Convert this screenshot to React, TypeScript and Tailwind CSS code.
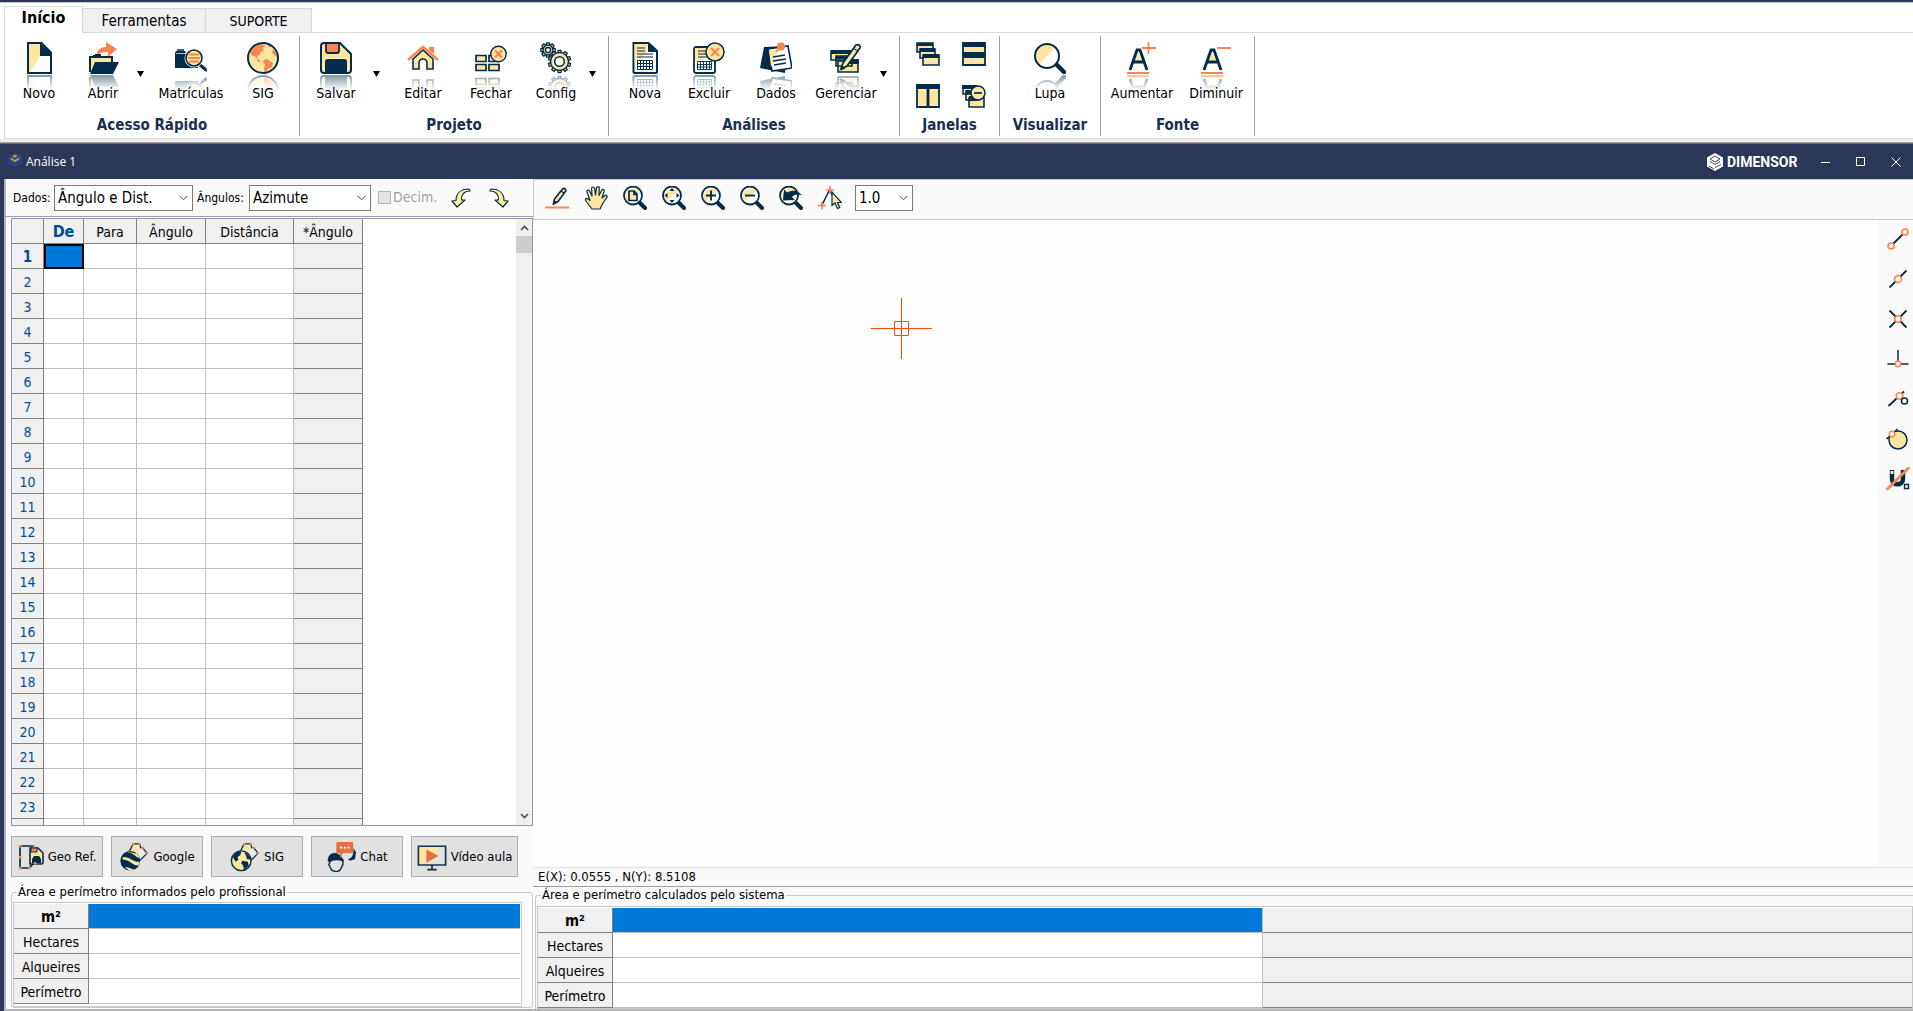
import React from "react";

const N = "#032c4b";
const C = "#fee5a0";
const O = "#f98551";

type IconProps = { className?: string };
type Icon = (p: IconProps) => React.ReactElement;

function svg(box: string, body: React.ReactNode): Icon {
  return ({ className }: IconProps) => (
    <svg viewBox={box} className={className} fill="none" aria-hidden="true">
      {body}
    </svg>
  );
}

/* ---------- ribbon icons (32 x 32) ---------- */

const Novo = svg("0 0 32 32", <>
  <path d="M4.500 1h14L28 11v20H4.500z" fill="#fff" />
  <path d="M5 1h13v12L7 30H5z" fill={C} />
  <path d="M17 1l11 10v3H17z" fill={N} />
  <path d="M5 1h13.500L28 10.500V31H5z" stroke={N} strokeWidth="2" />
</>);

const Abrir = svg("0 0 32 32", <>
  <path d="M9 14c1-7 6-9 10-9V0l11 7-9 8v-5c-5-.5-8 .5-12 4z" fill={O} />
  <path d="M3 30V15h22v7" fill={C} stroke={N} strokeWidth="2" />
  <path d="M6 14h3v-1h4v1" stroke={N} strokeWidth="2" />
  <path d="M8 20h24l-6 12H3z" fill={N} />
</>);

const Matriculas = svg("0 0 32 32", <>
  <path d="M0 11l1-2h9l1 2h12v15H0z" fill={N} />
  <path d="M2 8h7" stroke={N} strokeWidth="1.500" />
  <path d="M1 11.500h11" stroke="#fff" strokeWidth=".7" />
  <path d="M24 22l7 6" stroke={N} strokeWidth="3" strokeLinecap="round" />
  <circle cx="19" cy="16" r="8" fill={C} stroke="#fff" strokeWidth="3" />
  <circle cx="19" cy="16" r="8" fill={C} stroke={N} strokeWidth="1.600" />
  <path d="M14 12.500h10M13 16h12M14 19.500h10" stroke={O} strokeWidth="1.800" />
</>);

const Sig = svg("0 0 32 32", <>
  <circle cx="16" cy="16" r="15" fill={C} />
  <path d="M3 10C5 6 9 3 13 2l4 1 1 2-3 1 2 2-3 2-2 3-2 1 1 3-2-1-1-2H5zM20 3l3-.5 2 2-2 1zM10 17l4 2-1 1-3-1zM17 18l3-1 6 4-1 4-4 2-3 4-1-5 1-3-2-3zM26 7l3 4 1 4-3-2-2-3z" fill={O} />
  <circle cx="16" cy="16" r="15" stroke={N} strokeWidth="2" />
</>);

const Salvar = svg("0 0 32 32", <>
  <path d="M4 1h16l11 11v16a3 3 0 0 1-3 3H4a3 3 0 0 1-3-3V4a3 3 0 0 1 3-3z" fill={C} stroke={N} strokeWidth="2" />
  <path d="M6 1h13v8a2 2 0 0 1-2 2H8a2 2 0 0 1-2-2z" fill={O} stroke={N} strokeWidth="1.800" />
  <path d="M5 31V20a3 3 0 0 1 3-3h16a3 3 0 0 1 3 3v11z" fill={N} />
</>);

const Editar = svg("0 0 32 32", <>
  <path d="M6 17L16 8l10 9v10h-6v-6a4 4 0 0 0-8 0v6H6z" fill={C} stroke={N} strokeWidth="1.600" />
  <path d="M22 5h5v7l-5-4z" fill={O} />
  <path d="M1 18L16 5l15 13" stroke={O} strokeWidth="2.600" />
</>);

const Fechar = svg("0 0 32 32", <>
  <path d="M1 13.500h10v6H1zM14 13.500h10v6H14zM1 22.500h10v6H1zM14 22.500h10v6H14z" fill={C} stroke={N} strokeWidth="1.700" />
  <circle cx="23.500" cy="12" r="7.700" fill={C} stroke={N} strokeWidth="1.400" />
  <path d="M20 8.500l7 7M27 8.500l-7 7" stroke={O} strokeWidth="2.200" />
</>);

const teeth = (n: number) => Array.from({ length: n }, (_, i) => (i * 360) / n);

function Gear({ x, y, r, n, hole }: { x: number; y: number; r: number; n: number; hole: number }) {
  return (
    <g transform={`translate(${x} ${y})`}>
      {teeth(n).map((a) => (
        <path key={a} transform={`rotate(${a})`} d={`M-2 ${-r + 1}l.6-3.200h2.800l.6 3.200`} fill={C} stroke={N} strokeWidth="1.300" />
      ))}
      <circle r={r} stroke={N} strokeWidth="1.400" fill={C} />
      <circle r={hole} fill="#fff" stroke={N} strokeWidth="1.500" />
    </g>
  );
}

const Config = svg("0 0 32 32", <>
  <Gear x={8} y={8} r={5} n={8} hole={2.6} />
  <Gear x={19.500} y={19.500} r={9} n={10} hole={4.8} />
</>);

const Nova = svg("0 0 32 32", <>
  <path d="M4.500 1h15L28 9v21a1 1 0 0 1-1 1H5.500a1 1 0 0 1-1-1z" fill="#fff" stroke={N} strokeWidth="2" />
  <path d="M5.500 2h13v8L8 20H5.500z" fill={C} />
  <path d="M19 1l9 9h-9z" fill={N} />
  <path d="M8 6h8M8 9h8M8 12h16M8 15h16" stroke={N} strokeWidth="1.100" />
  <path d="M8.500 18.500h15v9h-15zM8 21.500h16M8 24.500h16M11.500 18v10M14.500 18v10M17.500 18v10M20.500 18v10" stroke={N} strokeWidth="1" />
</>);

const Excluir = svg("0 0 32 32", <>
  <path d="M4 5h18v24a2 2 0 0 1-2 2H3a2 2 0 0 1-2-2V7a2 2 0 0 1 2-2z" fill="#fff" stroke={N} strokeWidth="1.800" />
  <path d="M2 6h16v5L6 19H2z" fill={C} />
  <path d="M5 9h8M5 12h8M5 15h10" stroke={N} strokeWidth="1.200" />
  <path d="M4.500 19.500h14v8h-14zM4 22.500h15M4 25h15M7.500 19v9M10.500 19v9M13.500 19v9M16.500 19v9" stroke={N} strokeWidth=".9" />
  <circle cx="22" cy="10" r="9" fill={C} stroke={N} strokeWidth="1.500" />
  <path d="M18 6l8 8M26 6l-8 8" stroke={O} strokeWidth="2.300" />
</>);

const Dados = svg("0 0 32 32", <>
  <path d="M4 5l23-1-2 27L0 26z" fill={N} />
  <path d="M8 7l20-3 4 22-20 3z" fill="#fff" stroke={N} strokeWidth="1.600" />
  <path d="M9 8h9l-7 17z" fill={C} />
  <path d="M13 15l12-2M13 19l13-2M14 23l12-2" stroke={N} strokeWidth="1.500" />
  <path d="M20 5l-4 5" stroke={O} strokeWidth="2" />
  <circle cx="21" cy="4.500" r="4" fill={O} />
</>);

const Gerenciar = svg("0 0 32 32", <>
  <path d="M1 9h18v9H1zM6 14h16v10H6zM8 19h20v11H8z" fill={C} stroke={N} strokeWidth="1.600" />
  <path d="M1 8h20v4H1zM6 14h14v3H6zM14 17h15v5H14z" fill={N} />
  <path d="M11 27l2-6L26 3c3-1 5 1 4 3L17 24z" fill={C} stroke={N} strokeWidth="1.700" />
  <path d="M11 28l1-4 3 2zM23 6l5 3" fill={N} stroke={N} />
</>);

const Lupa = svg("0 0 32 32", <>
  <path d="M21 21l9 9" stroke={N} strokeWidth="4.500" strokeLinecap="round" />
  <circle cx="13" cy="14" r="12" fill="#fff" />
  <path d="M5 23A12 12 0 0 1 21 5z" fill={C} />
  <circle cx="13" cy="14" r="12" stroke={N} strokeWidth="2" />
</>);

const Aumentar = svg("0 0 32 32", <>
  <path d="M12 9l-4 11h8z" fill={C} />
  <path d="M4 28L11 8h3l7 20M7.500 20h10" stroke={N} strokeWidth="2.800" />
  <path d="M22.500 0v12M16 6h14M1 31h22" stroke={O} strokeWidth="1.800" />
</>);

const Diminuir = svg("0 0 32 32", <>
  <path d="M12 9l-4 11h8z" fill={C} />
  <path d="M4 28L11 8h3l7 20M7.500 20h10" stroke={N} strokeWidth="2.800" />
  <path d="M17 6h14M1 31h22" stroke={O} strokeWidth="1.800" />
</>);

/* ---------- window arrangement icons (24 x 24) ---------- */

const Cascata = svg("0 0 24 24", <>
  <path d="M1 1h16v9H1z" fill={C} stroke={N} strokeWidth="1.600" />
  <path d="M1 1h16v3H1z" fill={N} />
  <path d="M4 7h15v9H4z" fill={C} stroke={N} strokeWidth="1.600" />
  <path d="M4 6h15v4H4z" fill={N} />
  <path d="M7 13h16v10H7z" fill={C} stroke={N} strokeWidth="1.600" />
  <path d="M7 12h16v4H7z" fill={N} />
</>);
const Horizontal = svg("0 0 24 24", <>
  <path d="M1 1h22v10H1zM1 12h22v11H1z" fill={C} stroke={N} strokeWidth="1.800" />
  <path d="M1 1h22v4H1zM1 12h22v4H1z" fill={N} />
</>);
const Vertical = svg("0 0 24 24", <>
  <path d="M1 1h10.500v22H1zM12.500 1H23v22H12.500z" fill={C} stroke={N} strokeWidth="1.800" />
  <path d="M0 0h24v5H0z" fill={N} />
</>);
const Ocultar = svg("0 0 24 24", <>
  <path d="M1 2h14v8H1zM4 7h12v9H4zM7 14h15v9H7z" fill={C} stroke={N} strokeWidth="1.600" />
  <path d="M0 1h14v4H0zM4 6h10v4H4zM7 12h10v5H7z" fill={N} />
  <circle cx="16" cy="9" r="7" fill={C} stroke={N} strokeWidth="1.500" />
  <path d="M12 9h8" stroke={N} strokeWidth="1.700" />
</>);

/* ---------- drawing toolbar icons (24 x 24) ---------- */

const Lapis = svg("0 0 24 24", <>
  <path d="M8.500 18l1-5 8-10c2-1.500 4 .5 3.300 2L13 15.500z" fill={C} stroke={N} strokeWidth="1.600" strokeLinejoin="round" />
  <path d="M16 5l3.500 2.500M8.500 18l1-3 2 1.500z" stroke={N} strokeWidth="1.300" />
  <path d="M0 21.500h24" stroke={O} strokeWidth="2" />
</>);
const Mao = svg("0 0 24 24", (
  <path d="M8 23L2 15c-1.500-2 .5-3.500 2-2l2 1.500L3 6c-.5-2 2-2.700 2.700-.8L8 10 7.600 2.500c0-2 2.700-2 3 0L11.500 9l1-7c.4-2 2.900-1.700 2.800.3L15 9.500l2.700-5.200c1-1.700 3-.7 2.400 1.100L18 12l3-2.500c1.300-.8 2.800.5 1.800 1.900L19 17l-3 6z" fill={C} stroke={N} strokeWidth="1.200" strokeLinejoin="round" />
));
const lens = (inner: React.ReactNode) => svg("0 0 24 24", <>
  <path d="M16 16l6 6" stroke={N} strokeWidth="4" strokeLinecap="round" />
  <circle cx="10" cy="9.500" r="9" fill="#fff" />
  <path d="M4 16A9 9 0 0 1 17 4z" fill={C} />
  <circle cx="10" cy="9.500" r="9" stroke={N} strokeWidth="1.800" />
  {inner}
</>);
const LensPage = lens(<path d="M6 5h5l3 3v6.500H6zM11 5v3.500h3" fill={C} stroke={N} strokeWidth="1.700" />);
const LensExtents = lens(<path d="M10 2l2.500 3h-5zM10 17l2.500-3h-5zM2.500 9.500l3-2.500v5zM17.500 9.500l-3-2.500v5z" fill={N} />);
const LensPlus = lens(<path d="M10 4.500v10M5 9.500h10" stroke={N} strokeWidth="1.900" />);
const LensMinus = lens(<path d="M5 9.500h10" stroke={N} strokeWidth="1.900" />);
const LensBack = lens(<path d="M4 14.500l1-11 3 3c6-3 11-2.500 15 3-4-1.500-7-1.500-10 1.500l3 3z" fill={N} />);
const Vertice = svg("0 0 24 24", <>
  <path d="M4 19l7.500-15 2.500 5" stroke={N} strokeWidth="1.500" />
  <path d="M12 0v8M8 4h8M4 15.500v8M0 19.500h8" stroke={O} strokeWidth="1.700" />
  <path d="M14 6v13.500l3-2.500 2.500 5.500 2.300-1-2.300-5h4z" fill={C} stroke={N} strokeWidth="1.200" />
</>);
const Desfazer = svg("0 0 20 20", (
  <path d="M6 19L1 13l4-.5C5 6 9 1 18 1l1 2c-6 0-9 4-8.500 9H14z" fill="#fdf29a" stroke={N} strokeWidth="1.200" strokeLinejoin="round" />
));
const Refazer = svg("0 0 20 20", (
  <path d="M14 19l5-6-4-.5C15 6 11 1 2 1L1 3c6 0 9 4 8.500 9H6z" fill="#fdf29a" stroke={N} strokeWidth="1.200" strokeLinejoin="round" />
));

/* ---------- snap icons (24 x 24) ---------- */

const SnapEnd = svg("0 0 24 24", <>
  <path d="M6 18L18 6" stroke={N} strokeWidth="1.800" />
  <circle cx="5" cy="19" r="3" fill="#fff" stroke={O} strokeWidth="1.700" />
  <circle cx="19" cy="5" r="3" fill="#fff" stroke={O} strokeWidth="1.700" />
</>);
const SnapMid = svg("0 0 24 24", <>
  <path d="M3.500 20.500L20.500 3.500" stroke={N} strokeWidth="1.800" />
  <circle cx="12" cy="12" r="3.400" fill="#fff" stroke={O} strokeWidth="1.600" />
</>);
const SnapCross = svg("0 0 24 24", <>
  <path d="M3.500 20.500l17-17M3.500 3.500l17 17" stroke={N} strokeWidth="1.800" />
  <circle cx="12" cy="12" r="3.200" fill="#fff" stroke={O} strokeWidth="1.600" />
</>);
const SnapPerp = svg("0 0 24 24", <>
  <path d="M12 3v14M1.500 17h21" stroke={N} strokeWidth="1.500" />
  <circle cx="12" cy="17" r="2.700" fill="#fff" stroke={O} strokeWidth="1.500" />
</>);
const SnapNear = svg("0 0 24 24", <>
  <path d="M2.500 19L18 4.500" stroke={N} strokeWidth="1.800" />
  <circle cx="13.500" cy="9" r="3.200" fill="#fff" stroke={O} strokeWidth="1.600" />
  <circle cx="18.500" cy="14" r="3" fill="#fff" stroke={N} strokeWidth="1.600" />
</>);
const SnapTangent = svg("0 0 24 24", <>
  <circle cx="12" cy="13" r="9" fill={C} stroke={N} strokeWidth="1.500" />
  <path d="M.5 12l11-10" stroke={N} strokeWidth="1.500" />
  <circle cx="6" cy="7" r="2.700" fill="#fff" stroke={O} strokeWidth="1.500" />
</>);
const SnapOff = svg("0 0 24 24", <>
  <path d="M6 3v9c0 7 11 7 11 0V3" stroke={N} strokeWidth="4.500" />
  <path d="M4.500 4h3v3h-3z" fill={C} />
  <path d="M18.500 17.500h4v4h-4z" fill="#fff" stroke={N} strokeWidth="1.400" />
  <path d="M1.500 22L22.500 1" stroke={O} strokeWidth="2.800" strokeLinecap="round" />
</>);

/* ---------- action button icons ---------- */

const Dots = ({ p }: { p: number[][] }) => (
  <>{p.map(([x, y]) => <rect key={`${x}-${y}`} x={x - 1} y={y - 1} width="2.400" height="2.400" fill={O} />)}</>
);
const GeoRef = svg("0 0 26 30", <>
  <path d="M2 4h14M2 4v22h9l6-6" stroke={N} strokeWidth="1.700" />
  <path d="M12 6h8l5 5v9a2 2 0 0 1-2 2H12z" fill={C} stroke={N} strokeWidth="1.600" />
  <path d="M13 6h6v4h-6z" fill={O} stroke={N} />
  <path d="M14 21v-4l2-3h5l2 3v4z" fill={N} />
  <Dots p={[[2, 4], [16, 4], [2, 15], [2, 26], [11, 26], [17, 21]]} />
</>);
const parcel = (
  <>
    <path d="M11 10l4-8h7l1 4h3l4 6-10 10z" fill="#e9e9e9" />
    <path d="M11 10l4-8h4l1 20z" fill={C} />
    <path d="M11 10l4-8h7l1 4h2l5 6-10 10" stroke={N} strokeWidth="1.300" />
    <Dots p={[[11, 10], [15, 2], [22, 2], [25, 6], [29, 12], [20, 21]]} />
  </>
);
const Google = svg("0 0 32 32", <>
  {parcel}
  <circle cx="12" cy="20" r="10.500" fill={N} />
  <path d="M4 16c7-1 11 6 18 5l-1 4c-6 1-10-7-17-6zM6 27c4-1 8 3 11 2l-5 2zM9 11c6 0 9 6 13 6l-3-5c-4 1-6-2-10-1z" fill={C} />
</>);
const SigMap = svg("0 0 32 32", <>
  {parcel}
  <circle cx="12" cy="20" r="10.500" fill={C} />
  <path d="M3 16c2-4 5-6 9-6l-1 4-3 2 1 3-3 2zM13 20l6 1 1 4-5 5-1-5-2-2zM15 11c4 1 6 4 7 8l-4-1-1-4z" fill={N} />
  <circle cx="12" cy="20" r="10.500" stroke={N} strokeWidth="1.500" />
</>);
const Chat = svg("0 0 32 32", <>
  <path d="M2 21C1 13 9 9 15 14l4 5-1 3c-5-3-9-4-14-1zM23 18c5 0 7-6 6-12l3 5-1 7-5 2z" fill={N} />
  <path d="M5 20c5-2 8-2 13 0v4l-3 6-4 2-5-2-3-6z" fill="#e1e1e1" stroke={N} strokeWidth="1.500" />
  <path d="M12 0h16a1 1 0 0 1 1 1v10a1 1 0 0 1-1 1H18l-3 5v-5h-3a1 1 0 0 1-1-1V1a1 1 0 0 1 1-1z" fill="#df7440" />
  <path d="M15 6h2M19 6h2M23 6h2" stroke="#fff" strokeWidth="1.800" />
</>);
const Video = svg("0 0 32 32", <>
  <path d="M1 4h30v21H1z" fill="#e1e1e1" />
  <path d="M2 5h24L6 24H2z" fill={C} />
  <path d="M1.500 4.500h29v20h-29zM11 29.500h10M16 25v4" stroke="#14304f" strokeWidth="1.800" />
  <path d="M10 8l13 7-13 7z" fill="#df7440" />
</>);

/* ---------- ribbon ---------- */

function RibbonButton({ icon: I, label, w }: { icon: Icon; label: string; w: string }) {
  return (
    <button type="button" className={`flex shrink-0 flex-col items-center ${w}`}>
      <I className="size-8" />
      <span className="relative mt-px block h-[15px] overflow-hidden">
        <I className="size-8 -scale-y-100" />
        <span className="absolute inset-0 bg-linear-to-b from-white/50 to-white" />
      </span>
      <span className="relative -mt-1.5 text-[14px] leading-[18px]">{label}</span>
    </button>
  );
}

function MoreArrow({ label, w }: { label: string; w: string }) {
  return (
    <button type="button" aria-label={label} className={`flex h-16 shrink-0 items-center justify-center ${w}`}>
      <svg viewBox="0 0 7 6" className="h-1.5 w-[7px]" aria-hidden="true"><path d="M0 0h7L3.500 6z" fill="#000" /></svg>
    </button>
  );
}

function Group({ title, w, children }: { title: string; w: string; children: React.ReactNode }) {
  return (
    <section className={`flex shrink-0 flex-col border-r border-[#a0a0a0] ${w}`}>
      <div className="flex h-20 pt-1.5">{children}</div>
      <h2 className="text-center text-[15px] leading-[18px] font-bold text-[#1b2f55]">{title}</h2>
    </section>
  );
}

function Ribbon() {
  return (
    <header className="border-t-2 border-[#2c3659] bg-white">
      <nav className="flex items-end border-t border-[#c4c6cf] pt-[3px] pl-1">
        <button type="button" className="z-10 -mb-px h-[27px] w-[79px] border border-b-0 border-[#d9d9d9] bg-white pb-1 text-[16px] leading-[18px] font-bold">Início</button>
        <button type="button" className="h-6 w-[123px] border-t border-r border-[#d9d9d9] bg-[#f0f0f0] text-[15px] leading-[18px]">Ferramentas</button>
        <button type="button" className="h-6 w-[106px] border-t border-r border-[#d9d9d9] bg-[#f0f0f0] text-[14px] leading-[18px]">SUPORTE</button>
      </nav>
      <div className="ml-1 flex h-[107px] border border-r-0 border-[#d9d9d9] pt-[3px] pb-0.5">
        <Group title="Acesso Rápido" w="w-[295px]">
          <RibbonButton icon={Novo} label="Novo" w="w-[68px]" />
          <RibbonButton icon={Abrir} label="Abrir" w="w-[60px]" />
          <MoreArrow label="Mais opções de abrir" w="w-[14px]" />
          <RibbonButton icon={Matriculas} label="Matrículas" w="w-[88px]" />
          <RibbonButton icon={Sig} label="SIG" w="w-[56px]" />
        </Group>
        <Group title="Projeto" w="w-[309px]">
          <RibbonButton icon={Salvar} label="Salvar" w="w-[72px]" />
          <MoreArrow label="Mais opções de salvar" w="w-2" />
          <RibbonButton icon={Editar} label="Editar" w="w-[86px]" />
          <RibbonButton icon={Fechar} label="Fechar" w="w-[50px]" />
          <RibbonButton icon={Config} label="Config" w="w-[80px]" />
          <MoreArrow label="Mais opções de configuração" w="-ml-2 w-2" />
        </Group>
        <Group title="Análises" w="w-[291px]">
          <RibbonButton icon={Nova} label="Nova" w="w-[72px]" />
          <RibbonButton icon={Excluir} label="Excluir" w="w-[56px]" />
          <RibbonButton icon={Dados} label="Dados" w="w-[78px]" />
          <RibbonButton icon={Gerenciar} label="Gerenciar" w="w-[62px]" />
          <MoreArrow label="Mais opções de análises" w="w-3" />
        </Group>
        <Group title="Janelas" w="w-[100px]">
          <div className="grid grid-cols-2 content-start gap-x-[22px] gap-y-[18px] pl-4">
            {([["Cascata", Cascata], ["Lado a lado horizontal", Horizontal], ["Lado a lado vertical", Vertical], ["Ocultar janelas", Ocultar]] as [string, Icon][]).map(([l, I]) => (
              <button key={l} type="button" aria-label={l}><I className="size-6" /></button>
            ))}
          </div>
        </Group>
        <Group title="Visualizar" w="w-[101px]">
          <RibbonButton icon={Lupa} label="Lupa" w="w-[100px]" />
        </Group>
        <Group title="Fonte" w="w-[154px]">
          <RibbonButton icon={Aumentar} label="Aumentar" w="w-[82px]" />
          <RibbonButton icon={Diminuir} label="Diminuir" w="w-[66px]" />
        </Group>
      </div>
    </header>
  );
}

/* ---------- child window ---------- */

function TitleBar() {
  return (
    <div className="flex h-[35px] items-center bg-[#2c3659] pl-2 text-white">
      <svg viewBox="0 0 16 18" className="-mt-1 h-[15px] w-3.5" aria-hidden="true">
        <path d="M8 0l8 4.500v9L8 18l-8-4.500v-9z" fill="#2c438c" />
        <path d="M8 3l3 2-3 2-3-2zM3 6.500l5 3 5-3v2.500l-5 3-5-3z" fill="#e0982b" />
      </svg>
      <h1 className="ml-1 font-['Open_Sans','Noto_Sans',sans-serif] text-[12px] leading-4">Análise 1</h1>
      <div className="ml-auto flex items-center">
        <svg viewBox="0 0 16 18" className="h-[18px] w-4" aria-hidden="true">
          <path d="M8 0l8 4.500v9L8 18l-8-4.500v-9z" fill="#fff" />
          <path d="M3 6l5-3 5 3-5 3zM3 8.500l5 3 5-3M8 14.500l6-3M2 13l5 3" fill="none" stroke="#2c3659" strokeWidth=".9" />
        </svg>
        <span className="ml-1 w-[67px] font-['Roboto',sans-serif] text-[14px] leading-4 font-bold">DIMENSOR</span>
      </div>
      <div className="ml-[14px] flex h-full">
        <button type="button" aria-label="Minimizar" className="flex w-[35px] items-center justify-center"><svg viewBox="0 0 10 10" className="size-2.5"><path d="M0 5.500h9" stroke="#fff" /></svg></button>
        <button type="button" aria-label="Maximizar" className="flex w-[35px] items-center justify-center"><svg viewBox="0 0 10 10" className="size-2.5"><path d="M.5.500h8v8h-8z" fill="none" stroke="#fff" /></svg></button>
        <button type="button" aria-label="Fechar janela" className="flex w-[35px] items-center justify-center"><svg viewBox="0 0 10 10" className="size-2.5"><path d="M.5.500l9 9M9.500.500l-9 9" stroke="#fff" /></svg></button>
      </div>
    </div>
  );
}

function Select({ id, label, options, w }: { id: string; label: string; options: string[]; w: string }) {
  return (
    <span className={`relative block shrink-0 ${w}`}>
      <select id={id} aria-label={label} className="block h-[26px] w-full appearance-none border border-[#7a7a7a] bg-white pr-5 pl-[3px] text-[15px] leading-[22px]">
        {options.map((o) => <option key={o}>{o}</option>)}
      </select>
      <svg viewBox="0 0 9 6" className="pointer-events-none absolute top-2.5 right-[5px] h-1.5 w-[9px]" aria-hidden="true">
        <path d="M.5.800l4 4 4-4" fill="none" stroke="#444" />
      </svg>
    </span>
  );
}

const columns = [
  { label: "De", w: "w-[40px]" },
  { label: "Para", w: "w-[53px]" },
  { label: "Ângulo", w: "w-[69px]" },
  { label: "Distância", w: "w-[88px]" },
  { label: "*Ângulo", w: "w-[69px]" },
];
const rows = Array.from({ length: 24 }, (_, i) => i + 1);

function PointGrid() {
  return (
    <div className="ml-[5px] flex min-h-0 flex-1 overflow-hidden border border-[#7f9db9] bg-white">
      <div className="min-h-0 flex-1 overflow-hidden">
        <table className="w-[351px] table-fixed border-separate border-spacing-0 text-[14px] leading-[18px]">
          <thead>
            <tr className="h-[25px]">
              <th scope="col" aria-label="Linha" className="w-[32px] border-r border-b border-[#808080] bg-[#f0f0f0] p-0" />
              {columns.map((c, i) => (
                <th key={c.label} scope="col" className={`border-r border-b border-[#808080] bg-[#f0f0f0] p-0 pt-0.5 ${c.w} ${i === 0 ? "text-[16px] font-bold text-[#004e98]" : "font-normal"}`}>{c.label}</th>
              ))}
            </tr>
          </thead>
          <tbody>
            {rows.map((r) => (
              <tr key={r} className="h-[25px]">
                <th scope="row" className={`border-r border-b border-[#808080] bg-[#f0f0f0] p-0 pt-0.5 text-[#004e98] ${r === 1 ? "text-[15px] font-bold" : "font-normal"}`}>{r < rows.length ? r : null}</th>
                {columns.map((c, i) => (
                  <td key={c.label} className={
                    i === 4 ? "border-r border-b border-[#808080] bg-[#f0f0f0] p-0"
                      : i === 0 && r === 1 ? "border-2 border-black bg-[#0078d7] p-0"
                        : "border-r border-b border-[#c0c0c0] p-0"
                  } />
                ))}
              </tr>
            ))}
          </tbody>
        </table>
      </div>
      <div className="flex w-4 flex-col items-center bg-[#f0f0f0]">
        <svg viewBox="0 0 9 6" className="mt-1.5 h-1.5 w-[9px]" aria-hidden="true"><path d="M1 5l3.500-3.500L8 5" fill="none" stroke="#505050" strokeWidth="1.700" /></svg>
        <div className="mt-[5px] h-[17px] w-full bg-[#cdcdcd]" />
        <svg viewBox="0 0 9 6" className="mt-auto mb-1.5 h-1.5 w-[9px]" aria-hidden="true"><path d="M1 1l3.500 3.500L8 1" fill="none" stroke="#505050" strokeWidth="1.700" /></svg>
      </div>
    </div>
  );
}

function ActionButton({ icon: I, label, w, size = "size-[30px]" }: { icon: Icon; label: string; w: string; size?: string }) {
  return (
    <button type="button" className={`flex h-[41px] items-center justify-center gap-1 border border-[#adadad] bg-[#e1e1e1] text-[13px] leading-4 whitespace-nowrap ${w}`}>
      <I className={`shrink-0 ${size}`} />
      {label}
    </button>
  );
}

const measures = ["m²", "Hectares", "Alqueires", "Perímetro"];

function AreaTable({ rest }: { rest?: boolean }) {
  return (
    <div className={`overflow-hidden border border-[#c8c8c8] bg-white pt-px ${rest ? "" : "pr-px pb-0.5"}`}>
      <table className="w-full table-fixed border-separate border-spacing-0 text-[14px] leading-[18px]">
        <tbody>
          {measures.map((m, i) => (
            <tr key={m} className="h-[25px]">
              <th scope="row" className={`w-[75px] border-r border-b border-[#808080] bg-[#f0f0f0] p-0 pt-0.5 ${i === 0 ? "text-[15px] font-bold" : "font-normal"}`}>{m}</th>
              <td className={`border-b border-[#c0c0c0] p-0 ${rest ? "w-[650px] border-r" : ""} ${i === 0 ? "bg-[#0078d7]" : "bg-white"}`} />
              {rest && <td className="border-b border-[#808080] bg-[#f0f0f0] p-0" />}
            </tr>
          ))}
        </tbody>
      </table>
    </div>
  );
}

function LeftPane() {
  return (
    <div className="flex w-[527px] shrink-0 flex-col bg-[#fafafa]">
      <div className="flex h-[38px] items-center border-b border-[#a0a0a0] pl-[7px]">
        <label htmlFor="dados" className="w-[41px] text-[12px] whitespace-nowrap">Dados:</label>
        <Select id="dados" label="Dados" w="w-[139px]" options={["Ângulo e Dist.", "Coordenadas"]} />
        <label htmlFor="angulos" className="ml-1 w-[52px] text-[12px] whitespace-nowrap">Ângulos:</label>
        <Select id="angulos" label="Ângulos" w="w-[122px]" options={["Azimute", "Rumo"]} />
        <label className="ml-[7px] flex items-center gap-0.5 text-[14px] text-[#a0a0a0]">
          <input type="checkbox" disabled className="size-[13px] appearance-none border border-[#b4b4b4] bg-[#e4e4e4]" />
          Decim.
        </label>
        <button type="button" aria-label="Desfazer" className="ml-3.5"><Desfazer className="size-5" /></button>
        <button type="button" aria-label="Refazer" className="ml-[18px]"><Refazer className="size-5" /></button>
      </div>
      <div className="h-px bg-white" />
      <PointGrid />
      <div className="flex gap-2 pt-2.5 pb-[7px] pl-[5px]">
        <ActionButton icon={GeoRef} label="Geo Ref." w="w-[92px]" size="h-[30px] w-[26px]" />
        <ActionButton icon={Google} label="Google" w="w-[92px]" />
        <ActionButton icon={SigMap} label="SIG" w="w-[92px]" />
        <ActionButton icon={Chat} label="Chat" w="w-[92px]" />
        <ActionButton icon={Video} label="Vídeo aula" w="w-[107px]" />
      </div>
      <fieldset className="mb-px ml-[5px] rounded-[3px] border border-[#c8c8c8] pr-2.5 pl-px">
        <legend className="ml-1 px-px text-[13px] leading-4">Área e perímetro informados pelo profissional</legend>
        <div className="pt-0.5"><AreaTable /></div>
      </fieldset>
    </div>
  );
}

const drawTools: [string, Icon][] = [
  ["Desenhar", Lapis], ["Mover", Mao], ["Zoom página", LensPage], ["Zoom extensão", LensExtents],
  ["Mais zoom", LensPlus], ["Menos zoom", LensMinus], ["Zoom anterior", LensBack], ["Selecionar vértice", Vertice],
];
const snaps: [string, Icon][] = [
  ["Extremidade", SnapEnd], ["Ponto médio", SnapMid], ["Interseção", SnapCross], ["Perpendicular", SnapPerp],
  ["Próximo", SnapNear], ["Tangente", SnapTangent], ["Desligar captura", SnapOff],
];

function RightPane() {
  return (
    <div className="flex min-w-0 flex-1 flex-col bg-[#fafafa]">
      <div className="flex h-[41px] items-center gap-[15px] border border-r-0 border-[#c8c8c8] pb-[3px] pl-[11px]">
        {drawTools.map(([l, I]) => (
          <button key={l} type="button" aria-label={l}><I className="size-6" /></button>
        ))}
        <div className="-ml-0.5"><Select id="escala" label="Escala" w="w-[58px]" options={["1.0", "2.0", "5.0"]} /></div>
      </div>
      <div className="flex min-h-0 flex-1">
        <div className="relative flex-1 bg-[#fefefe]">
          <svg viewBox="0 0 61 61" className="absolute top-[78px] left-[338px] size-[61px]" aria-hidden="true">
            <path d="M30.500 0v61M0 30.500h61M23.500 23.500h14v14h-14z" fill="none" stroke="#fa4b05" />
          </svg>
        </div>
        <div className="flex w-[35px] flex-col items-center gap-4 pt-[7px] pl-[5px]">
          {snaps.map(([l, I]) => (
            <button key={l} type="button" aria-label={l}><I className="size-6" /></button>
          ))}
        </div>
      </div>
      <p className="h-5 border-t border-b border-t-[#e0e0e0] border-b-[#a0a0a0] pl-[5px] text-[13px] leading-[18px]">E(X): 0.0555 , N(Y): 8.5108</p>
      <fieldset className="ml-0.5 min-w-0 rounded-tl-[3px] border border-r-0 border-b-0 border-[#c8c8c8] pl-px">
        <legend className="ml-1 px-px text-[13px] leading-4">Área e perímetro calculados pelo sistema</legend>
        <div className="pt-[3px]"><AreaTable rest /></div>
      </fieldset>
    </div>
  );
}

export default function App() {
  return (
    <div className="flex h-screen flex-col overflow-hidden bg-[#f0f0f0] font-['DejaVu_Sans_Condensed','Noto_Sans',sans-serif] text-black">
      <Ribbon />
      <div className="mt-[3px] flex min-h-0 flex-1 flex-col border-t border-[#a0a0a0]">
        <div className="h-px shrink-0 bg-[#696969]" />
        <div className="shrink-0"><TitleBar /></div>
        <div className="flex min-h-0 flex-1 border-l-4 border-[#2c3659]">
          <div className="flex min-w-0 flex-1 border-b-2 border-l-2 border-[#b4b4b4]">
            <LeftPane />
            <RightPane />
          </div>
        </div>
      </div>
    </div>
  );
}
